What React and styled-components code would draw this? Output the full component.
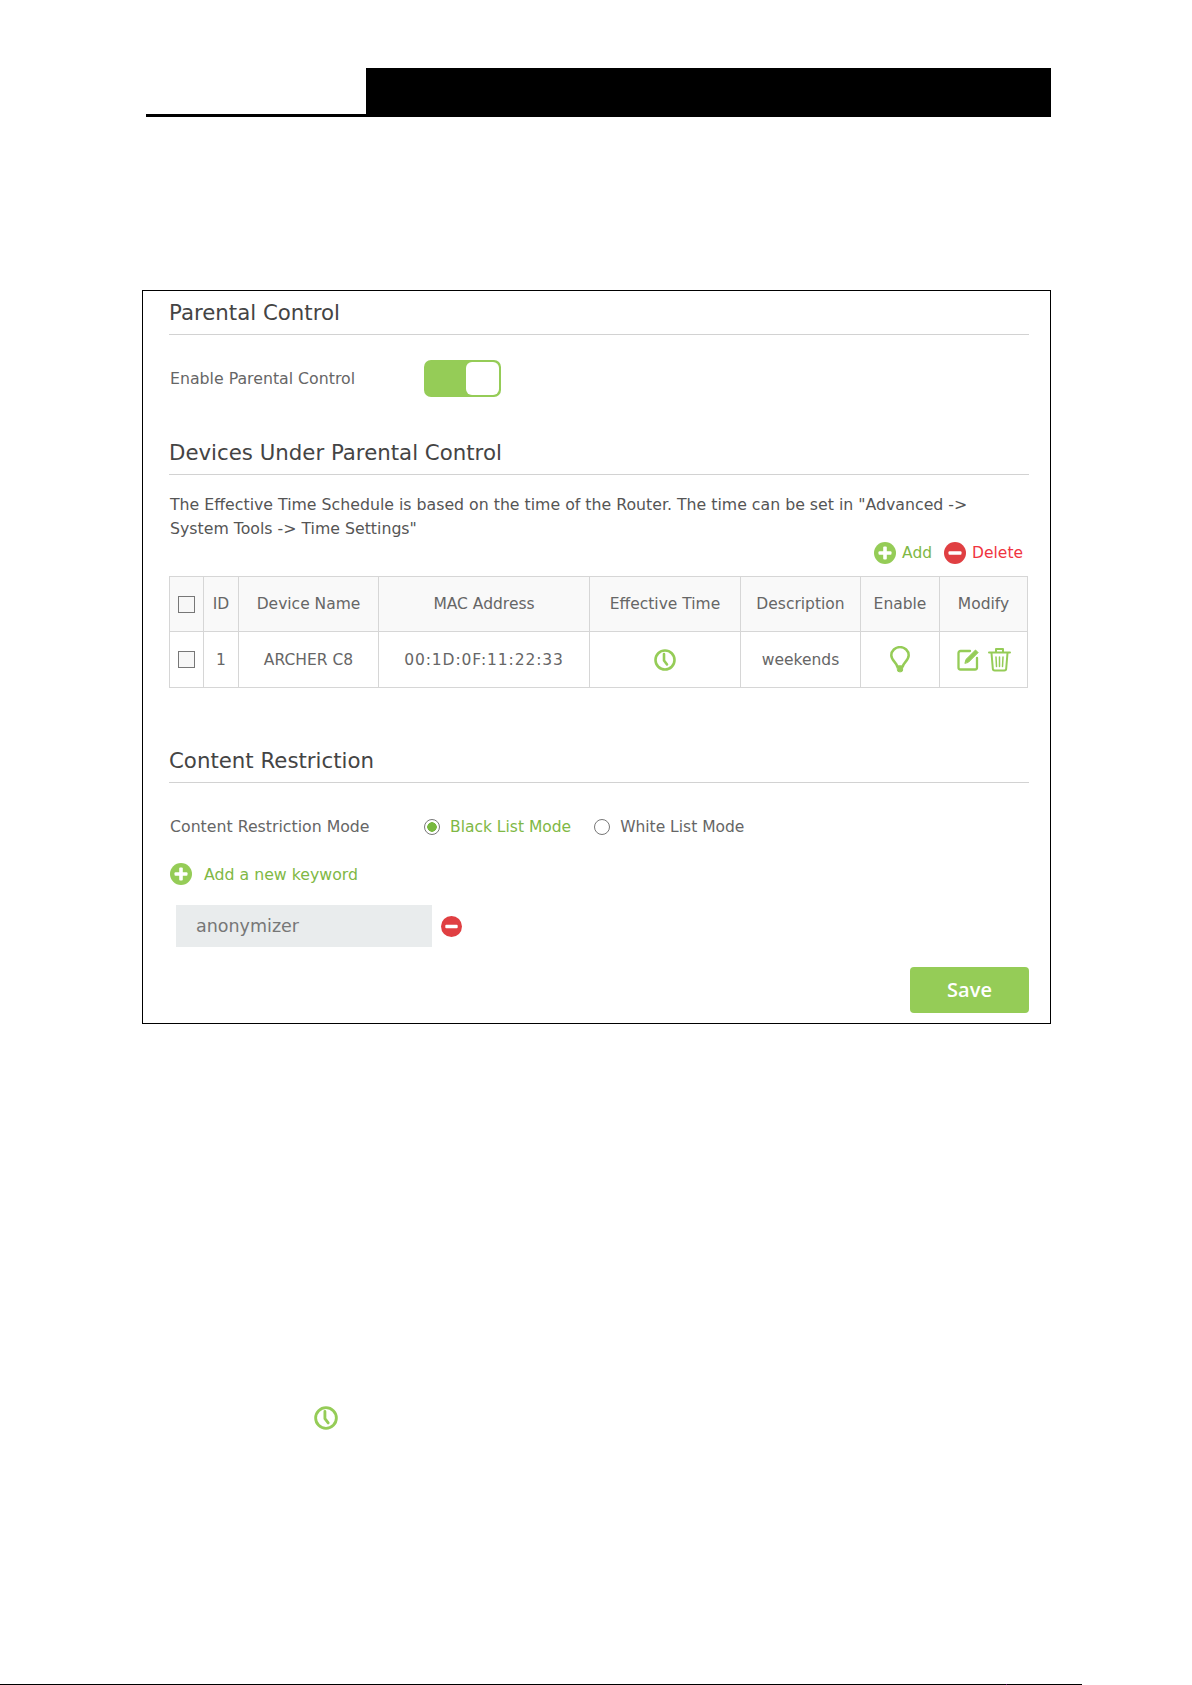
import React from "react";
import styled, { createGlobalStyle } from "styled-components";

const GREEN = "#95cc57";
const RED = "#e03f42";

const GlobalStyle = createGlobalStyle`
  html, body {
    margin: 0;
    padding: 0;
    background: #fff;
  }
  body {
    font-family: "DejaVu Sans", "Noto Sans", "Liberation Sans", sans-serif;
    color: #666;
  }
`;

const columns = [34, 35, 140, 211, 151, 120, 79, 88];

const ClockIcon = ({ size = 22 }) => (
  <svg width={size} height={size} viewBox="0 0 22 22" fill="none" stroke={GREEN} strokeWidth="2.6" strokeLinecap="round" strokeLinejoin="round">
    <circle cx="11" cy="11" r="9.5" />
    <path d="M10 5v6.5l3 4" />
  </svg>
);

const BulbIcon = () => (
  <svg width="20" height="27" viewBox="0 0 20 27" fill="none" stroke={GREEN} strokeWidth="2.5" strokeLinecap="round" strokeLinejoin="round">
    <path d="M7.2 20.5C6.6 16.5 1.3 14.5 1.3 9.3a8.7 8.2 0 0 1 17.4 0c0 5.2-5.3 7.2-5.9 11.2z" />
    <path d="M7.4 21h5.2v3a1.8 1.8 0 0 1-1.8 1.8H9.2A1.8 1.8 0 0 1 7.4 24z" fill={GREEN} strokeWidth="1" />
  </svg>
);

const EditIcon = () => (
  <svg width="23" height="23" viewBox="0 0 23 23" fill="none" stroke={GREEN} strokeWidth="2.3" strokeLinecap="round" strokeLinejoin="round">
    <path d="M13 3H3.5A2 2 0 0 0 1.5 5v14.5a2 2 0 0 0 2 2H18a2 2 0 0 0 2-2V10" />
    <path d="M8 15l1-3.6L18.5 2l2.6 2.6-9.5 9.5z" fill={GREEN} strokeWidth="1" />
  </svg>
);

const TrashIcon = () => (
  <svg width="23" height="25" viewBox="0 0 23 25" fill="none" stroke={GREEN} strokeWidth="2" strokeLinecap="round" strokeLinejoin="round">
    <path d="M1 5.5h21M8 5V2h7v3" />
    <path d="M3.5 6l1.3 15.5a2 2 0 0 0 2 2h9.4a2 2 0 0 0 2-2L19.5 6" />
    <path d="M8 10l.5 9.5M11.5 10v9.5M15 10l-.5 9.5" strokeWidth="1.5" />
  </svg>
);

const RoundSign = ({ plus, size = 22 }) => (
  <svg width={size} height={size} viewBox="0 0 22 22">
    <circle cx="11" cy="11" r="11" fill={plus ? GREEN : RED} />
    <rect x="4.5" y="9.2" width="13" height="3.6" rx="1" fill="#fff" />
    {plus && <rect x="9.2" y="4.5" width="3.6" height="13" rx="1" fill="#fff" />}
  </svg>
);

const App = () => (
  <Page>
    <GlobalStyle />
    <Header>
      <HeaderTab />
    </Header>

    <Frame>
      <SectionTitle>Parental Control</SectionTitle>
      <SettingRow $top={25}>
        <RowLabel>Enable Parental Control</RowLabel>
        <Toggle>
          <Knob />
        </Toggle>
      </SettingRow>

      <SectionTitle $top={34}>Devices Under Parental Control</SectionTitle>
      <Note>
        The Effective Time Schedule is based on the time of the Router. The time can be set in "Advanced -&gt;
        <br />
        System Tools -&gt; Time Settings"
      </Note>

      <TableActions>
        <ActionLink $color="#7fb845">
          <RoundSign plus />
          Add
        </ActionLink>
        <ActionLink $color="#f0343f">
          <RoundSign />
          Delete
        </ActionLink>
      </TableActions>

      <DeviceTable>
        <colgroup>
          {columns.map((width, i) => (
            <col key={i} style={{ width }} />
          ))}
        </colgroup>
        <thead>
          <tr>
            <HeadCell><CheckBox /></HeadCell>
            <HeadCell>ID</HeadCell>
            <HeadCell>Device Name</HeadCell>
            <HeadCell>MAC Address</HeadCell>
            <HeadCell>Effective Time</HeadCell>
            <HeadCell>Description</HeadCell>
            <HeadCell>Enable</HeadCell>
            <HeadCell>Modify</HeadCell>
          </tr>
        </thead>
        <tbody>
          <tr>
            <BodyCell><CheckBox /></BodyCell>
            <BodyCell>1</BodyCell>
            <BodyCell>ARCHER C8</BodyCell>
            <BodyCell $spaced>00:1D:0F:11:22:33</BodyCell>
            <BodyCell><IconRow><ClockIcon /></IconRow></BodyCell>
            <BodyCell>weekends</BodyCell>
            <BodyCell><IconRow><BulbIcon /></IconRow></BodyCell>
            <BodyCell>
              <IconRow>
                <EditIcon />
                <TrashIcon />
              </IconRow>
            </BodyCell>
          </tr>
        </tbody>
      </DeviceTable>

      <SectionTitle $top={51}>Content Restriction</SectionTitle>
      <SettingRow $top={25}>
        <RowLabel>Content Restriction Mode</RowLabel>
        <RadioOption $selected>
          <Radio $selected />
          Black List Mode
        </RadioOption>
        <RadioOption>
          <Radio />
          White List Mode
        </RadioOption>
      </SettingRow>

      <AddKeyword>
        <RoundSign plus />
        Add a new keyword
      </AddKeyword>

      <KeywordRow>
        <KeywordInput>anonymizer</KeywordInput>
        <RoundSign size={21} />
      </KeywordRow>

      <Footer>
        <SaveButton>Save</SaveButton>
      </Footer>
    </Frame>

    <LoneClock>
      <ClockIcon size={24} />
    </LoneClock>

    <BottomRule>
      <BottomTick />
    </BottomRule>
  </Page>
);

const Page = styled.div`
  display: flex;
  flex-direction: column;
  height: 1685px;
  overflow: hidden;
  background: #fff;
`;

const Header = styled.div`
  display: flex;
  justify-content: flex-end;
  align-items: flex-start;
  height: 46px;
  width: 905px;
  margin: 68px 0 0 146px;
  border-bottom: 3px solid #000;
`;

const HeaderTab = styled.div`
  width: 685px;
  height: 46px;
  background: #000;
`;

const Frame = styled.div`
  box-sizing: border-box;
  width: 909px;
  height: 734px;
  margin: 173px 0 0 142px;
  padding: 0 21px 0 27px;
  border: 1px solid #000;
  display: flex;
  flex-direction: column;
`;

const SectionTitle = styled.h2`
  margin: ${(p) => p.$top || 0}px 0 0 -1px;
  padding: 7px 0 6px 0;
  height: 30px;
  box-sizing: content-box;
  line-height: 30px;
  font-size: 21.3px;
  font-weight: 400;
  color: #444;
  border-bottom: 1px solid #d2d2d2;
`;

const SettingRow = styled.div`
  display: flex;
  align-items: center;
  margin-top: ${(p) => p.$top}px;
  height: 37px;
`;

const RowLabel = styled.div`
  width: 254px;
  font-size: 15.75px;
  color: #666;
`;

const Toggle = styled.div`
  box-sizing: border-box;
  width: 77px;
  height: 37px;
  padding: 2px;
  display: flex;
  justify-content: flex-end;
  background: ${GREEN};
  border-radius: 7px;
`;

const Knob = styled.div`
  width: 33px;
  background: #fff;
  border-radius: 6px;
`;

const Note = styled.p`
  margin: 18px 0 0;
  font-size: 15.75px;
  line-height: 24px;
  color: #555;
`;

const TableActions = styled.div`
  display: flex;
  justify-content: flex-end;
  gap: 12px;
  height: 24px;
  padding-right: 6px;
`;

const ActionLink = styled.div`
  display: flex;
  align-items: center;
  gap: 6px;
  font-size: 15.5px;
  color: ${(p) => p.$color};
`;

const DeviceTable = styled.table`
  width: 858px;
  margin: 11px 0 0 -1px;
  border-collapse: collapse;
  table-layout: fixed;
  font-size: 15.5px;
  color: #666;
`;

const HeadCell = styled.th`
  height: 54px;
  padding: 0;
  font-weight: 400;
  text-align: center;
  background: #f9f9f9;
  border: 1px solid #d6d6d6;
`;

const BodyCell = styled.td`
  height: 55px;
  padding: 0;
  text-align: center;
  letter-spacing: ${(p) => (p.$spaced ? "0.9px" : "normal")};
  border: 1px solid #d6d6d6;
`;

const IconRow = styled.div`
  display: flex;
  align-items: center;
  justify-content: center;
  gap: 8px;
`;

const CheckBox = styled.span`
  display: block;
  box-sizing: border-box;
  width: 17px;
  height: 17px;
  margin: 0 auto;
  background: #f7f7f7;
  border: 1px solid #777;
`;

const RadioOption = styled.div`
  display: flex;
  align-items: center;
  gap: 10px;
  margin-right: 23px;
  font-size: 15.5px;
  color: ${(p) => (p.$selected ? "#7fb845" : "#666")};
`;

const Radio = styled.span`
  box-sizing: border-box;
  width: 16px;
  height: 16px;
  border: 1px solid #777;
  border-radius: 50%;
  background: ${(p) =>
    p.$selected ? "radial-gradient(circle, #78b83f 0 4.5px, #fff 5px)" : "#fff"};
`;

const AddKeyword = styled.div`
  display: flex;
  align-items: center;
  gap: 12px;
  margin-top: 11px;
  height: 36px;
  font-size: 15.75px;
  color: #7fb845;
`;

const KeywordRow = styled.div`
  display: flex;
  align-items: center;
  gap: 9px;
  margin: 13px 0 0 6px;
`;

const KeywordInput = styled.div`
  box-sizing: border-box;
  width: 256px;
  height: 42px;
  padding-left: 20px;
  line-height: 42px;
  font-size: 17.5px;
  color: #777;
  background: #e9eced;
`;

const Footer = styled.div`
  display: flex;
  justify-content: flex-end;
  margin-top: 20px;
`;

const SaveButton = styled.div`
  width: 119px;
  height: 46px;
  line-height: 46px;
  text-align: center;
  font-family: "Open Sans", "Noto Sans", sans-serif;
  font-size: 20px;
  font-weight: 600;
  color: #fff;
  background: ${GREEN};
  border-radius: 4px;
`;

const LoneClock = styled.div`
  display: flex;
  margin: 382px 0 0 314px;
`;

const BottomRule = styled.div`
  position: relative;
  width: 1082px;
  height: 1px;
  margin-top: auto;
  background: #000;
`;

const BottomTick = styled.span`
  position: absolute;
  left: 1006px;
  top: 0;
  width: 1px;
  height: 1px;
  background: #606;
`;

export default App;
